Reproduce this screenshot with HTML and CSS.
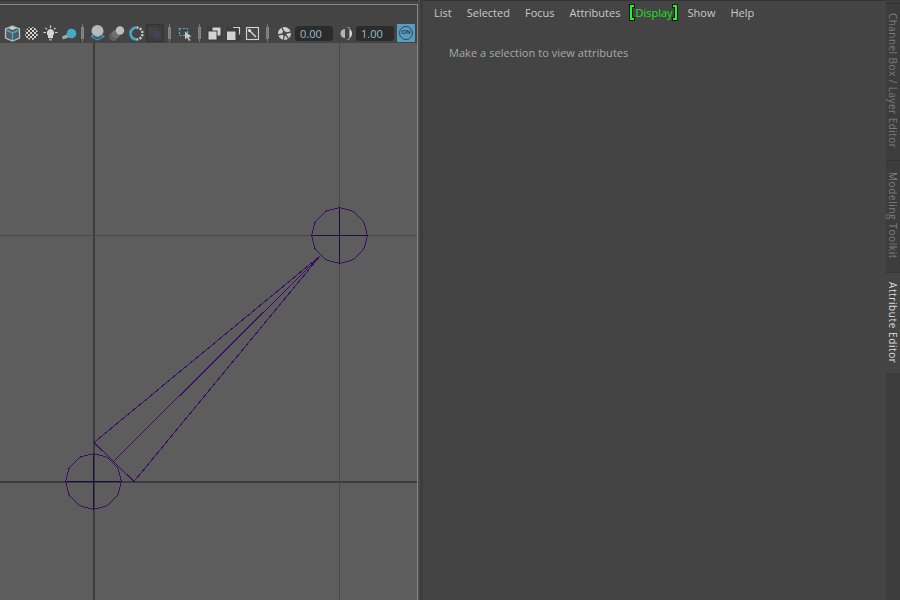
FILE: index.html
```html
<!DOCTYPE html>
<html lang="en">
<head>
<meta charset="utf-8">
<title>Attribute Editor</title>
<link rel="stylesheet" href="styles.css">
</head>
<body>
<div class="app">
  <section class="view-panel">
    <div class="toolbar">
      <div class="tb-group">
        <svg class="icon" viewBox="0 0 19 19"><path d="M9.500 2 16.500 5v9L9.500 17 2.500 14V5z" fill="#505c60" stroke="#bcbcbc" stroke-width="1.300"/><path d="M3 6l6.500 3 6.500-3M9.500 9v7" fill="none" stroke="#4aa6c2" stroke-width="1.500"/><path d="M9.500 2.500 13.500 4.200 9.500 6 5.500 4.200z" fill="#d0d0d0"/></svg>
        <svg class="icon" viewBox="0 0 19 19"><defs><pattern id="chk" width="4" height="4" patternUnits="userSpaceOnUse"><rect width="4" height="4" fill="#3f3f3f"/><rect width="2" height="2" fill="#d2d2d2"/><rect x="2" y="2" width="2" height="2" fill="#d2d2d2"/></pattern></defs><circle cx="9.500" cy="9.500" r="6.500" fill="url(#chk)"/></svg>
        <svg class="icon" viewBox="0 0 19 19"><path d="M9.500 5a3.800 3.800 0 0 1 2.500 6.500V14H7v-2.500A3.800 3.800 0 0 1 9.500 5z" fill="#d6d6d6"/><rect x="8" y="14.500" width="3" height="2" fill="#9a9a9a"/><path d="M9.500 1.500v2.500M2.500 8.500h2.500M14 8.500h2.500M4.500 3.800l1.500 1.500M14.500 3.800l-1.500 1.500" stroke="#d6d6d6" stroke-width="1.200"/></svg>
        <svg class="icon" viewBox="0 0 19 19"><path d="M2 12.500l5.500-2.500 1 3.500L3 15.500z" fill="#a8a8a8"/><circle cx="11.500" cy="9.500" r="4.800" fill="#45a9c9"/></svg>
      </div>
      <span class="grip grip-a"></span>
      <div class="tb-group">
        <svg class="icon" viewBox="0 0 19 19"><circle cx="9.500" cy="7" r="6" fill="#b9b9b9"/><path d="M3 12.500l6.500 3.500 6.500-3.500-3-1.800M3 12.500l3-1.800M5.500 11l7 3.500M13.500 11l-7 3.500" fill="none" stroke="#45a0c0" stroke-width="1.100"/></svg>
        <svg class="icon" viewBox="0 0 19 19"><circle cx="6.500" cy="12.500" r="4.500" fill="#5f5f5f"/><circle cx="9" cy="10" r="4.200" fill="#6f6f6f"/><circle cx="13" cy="6.500" r="4.200" fill="#bdbdbd"/></svg>
        <svg class="icon" viewBox="0 0 19 19"><path d="M10.500 3.500a6 6 0 0 0 0 12" fill="none" stroke="#45a9c9" stroke-width="2.600"/><path d="M10.500 3.500a6 6 0 0 1 0 12" fill="none" stroke="#c8c8c8" stroke-width="2.400" stroke-dasharray="2 1.300"/></svg>
        <span class="swatch"><svg class="swatch-art" viewBox="0 0 18 18"><defs><pattern id="chk2" width="2" height="2" patternUnits="userSpaceOnUse"><rect width="2" height="2" fill="#3a3a3a"/><rect width="1" height="1" fill="#4d4d4d"/><rect x="1" y="1" width="1" height="1" fill="#4d4d4d"/></pattern></defs><rect x="3" y="3" width="9" height="9" fill="url(#chk2)"/><rect x="7" y="7" width="8" height="8" fill="#3e4556"/></svg></span>
      </div>
      <span class="grip grip-b"></span>
      <svg class="icon" viewBox="0 0 19 19"><rect x="3.500" y="4.500" width="8" height="7" fill="none" stroke="#4fb8c8" stroke-width="1.200" stroke-dasharray="2 1.500"/><path d="M9 7.500l6.500 5-2.800.4 1.800 3.400-1.600.7-1.700-3.400L9 15.500z" fill="#c8c8c8"/></svg>
      <span class="grip grip-c"></span>
      <div class="tb-group">
        <svg class="icon" viewBox="0 0 19 19"><rect x="2" y="2" width="15" height="15" rx="1" fill="#3e3e3e"/><path d="M7.500 3.500h8v8h-3V6.500h-5z" fill="#d2d2d2"/><rect x="3.500" y="7.500" width="8" height="8" fill="#d2d2d2"/></svg>
        <svg class="icon" viewBox="0 0 19 19"><rect x="2" y="2" width="15" height="15" rx="1" fill="#3e3e3e"/><path d="M9 3.500h6.500v7" fill="none" stroke="#d2d2d2" stroke-width="1.200"/><rect x="3" y="7.500" width="8.500" height="8.500" fill="#d2d2d2"/></svg>
        <svg class="icon" viewBox="0 0 19 19"><rect x="3.500" y="3.500" width="12" height="12" fill="#4a4a4a" stroke="#d2d2d2" stroke-width="1.100"/><path d="M6 6l7 7" stroke="#d2d2d2" stroke-width="1.500"/><circle cx="6.500" cy="6.500" r="1.600" fill="#e0e0e0"/></svg>
      </div>
      <span class="grip grip-d"></span>
      <svg class="icon" viewBox="0 0 19 19"><circle cx="9.500" cy="9.500" r="6.500" fill="#cfcfcf"/><path d="M9.500 9.500 7 3.500M9.500 9.500l6.500-1.500M9.500 9.500l4 5M9.500 9.500l-6.500 1.500M9.500 9.500l-1 6.500" stroke="#4a4a4a" stroke-width="1.300"/><circle cx="9.500" cy="9.500" r="2.200" fill="#4a4a4a"/></svg>
      <span class="field field-first">0.00</span>
      <svg class="icon icon-half" viewBox="0 0 19 19"><path d="M9 5a4.500 4.500 0 0 0 0 9z" fill="#b4b4b4"/><path d="M10 3.500h3.500v12H10a6 6 0 0 0 0-12z" fill="#e0e0e0"/></svg>
      <span class="field">1.00</span>
      <span class="on-btn"><span class="on-ring">ON</span></span>
    </div>
    <div class="viewport">
      <svg class="scene" viewBox="0 0 417 557" preserveAspectRatio="xMinYMin">
        <defs>
          <polygon id="ring" points="28,0 24.200,14 14,24.200 0,28 -14,24.200 -24.200,14 -28,0 -24.200,-14 -14,-24.200 0,-28 14,-24.200 24.200,-14"/>
        </defs>
        <path class="grid-major" d="M94 0V557M0 439H417"/>
        <path class="grid-minor" d="M339.500 0V557M0 192.500H417"/>
        <g class="wire">
          <use href="#ring" x="93.500" y="438.500"/>
          <use href="#ring" x="339.500" y="192.500"/>
          <path class="wire-cross" d="M93.500 410.500V466.500M65.500 438.500H121.500M339.500 164.500V220.500M311.500 192.500H367.500"/>
          <path d="M320 213 94 399.500 134 438.500zM320 213 113 419"/>
        </g>
      </svg>
    </div>
  </section>
  <div class="gutter"></div>
  <section class="editor">
    <nav class="menu">
      <span class="menu-item">List</span>
      <span class="menu-item">Selected</span>
      <span class="menu-item">Focus</span>
      <span class="menu-item">Attributes</span>
      <span class="menu-active"><span class="bracket bracket-l"></span><span class="menu-green">Display</span><span class="bracket bracket-r"></span></span>
      <span class="menu-item">Show</span>
      <span class="menu-item">Help</span>
    </nav>
    <p class="message">Make a selection to view attributes</p>
  </section>
  <aside class="tabs">
    <div class="tab tab-channel"><span class="tab-label">Channel Box / Layer Editor</span></div>
    <div class="tab tab-model"><span class="tab-label">Modeling Toolkit</span></div>
    <div class="tab tab-attr"><span class="tab-label">Attribute Editor</span></div>
    <div class="tab-rest"></div>
  </aside>
</div>
</body>
</html>
```
FILE: styles.css
```css
* { box-sizing: border-box; }
html, body { margin: 0; height: 100%; overflow: hidden; }
body { background: #444; font-family: "Open Sans", "Liberation Sans", sans-serif; font-size: 11px; }
.app { display: flex; width: 900px; height: 600px; background: #444; }

.view-panel { width: 418px; height: 600px; display: flex; flex-direction: column; border-top: 1px solid #333; padding-top: 3px; }
.toolbar { height: 39px; flex: none; display: flex; align-items: center; padding: 18px 0 0 3px; border-top: 1px solid #868686; border-right: 1px solid #868686; }
.tb-group { display: flex; align-items: center; }
.icon { width: 19px; height: 19px; flex: none; display: block; }
.icon-half { margin: 0 1px 0 3px; }
.grip { flex: none; width: 3px; height: 18px; background: linear-gradient(#777, #777) center / 1px 100% no-repeat, linear-gradient(#858585, #858585) center / 3px 12px no-repeat; }
.grip-a { margin: 0 4px 0 2px; }
.grip-b { margin: 0 5px 0 4px; }
.grip-c { margin: 0 4px 0 3px; }
.grip-d { margin: 0 6px 0 4px; }
.swatch { width: 18px; height: 18px; margin-left: 1px; background: #3d3d3d; border: 1px solid #333; display: block; }
.swatch-art { width: 16px; height: 16px; display: block; }
.field { flex: none; width: 38px; height: 15px; padding-left: 5px; background: #2b2b2b; border-radius: 3px; color: #95bdd3; font-size: 11px; line-height: 15px; }
.field-first { margin-left: 1px; }
.on-btn { flex: none; width: 18px; height: 18px; margin-left: 3px; background: #5a9cc0; display: flex; align-items: center; justify-content: center; }
.on-ring { width: 14px; height: 14px; border: 1.500px solid #2c4a5e; border-radius: 50%; color: #243c4e; font-family: "Liberation Sans", sans-serif; font-size: 6px; font-weight: bold; line-height: 11px; text-align: center; }

.viewport { flex: 1; background: #5d5d5d; border-right: 1px solid #868686; min-height: 0; }
.scene { display: block; width: 417px; height: 557px; }
.grid-major { fill: none; stroke: #3c3c3c; stroke-width: 2; }
.grid-minor { fill: none; stroke: #484848; stroke-width: 1; }
.wire { fill: none; stroke: #3b0f66; stroke-width: 1; shape-rendering: crispEdges; }
.wire-cross { stroke: #200a40; }

.gutter { width: 5px; flex: none; background: linear-gradient(90deg, #4a4a4a 0 2px, #3c3c3c 2px 5px); }

.editor { flex: 1; display: flex; flex-direction: column; padding: 1px 0 0; border-top: 1px solid #333; min-width: 0; }
.menu { height: 20px; flex: none; display: flex; align-items: center; padding-left: 11px; color: #c8c8c8; }
.menu-item { margin-right: 15px; }
.menu-active { display: flex; align-items: center; margin: 0 11px 0 -5px; }
.menu-green { color: #18e818; margin: 0 0 0 1px; }
.bracket { width: 4px; height: 15px; border: 2px solid #14ff14; filter: drop-shadow(1px 0 0 #111) drop-shadow(-1px 0 0 #111) drop-shadow(0 1px 0 #111) drop-shadow(0 -1px 0 #111); display: block; }
.bracket-l { border-right: 0; }
.bracket-r { border-left: 0; }
.message { margin: 23px 0 0 26px; color: #a8a8a8; letter-spacing: .05px; }

.tabs { width: 14px; flex: none; display: flex; flex-direction: column; background: #3c3c3c; padding-top: 3px; }
.tab { flex: none; display: flex; justify-content: flex-start; align-items: center; writing-mode: vertical-rl; font-size: 10px; letter-spacing: .6px; line-height: 14px; white-space: nowrap; color: #7d7d7d; border-top: 1px solid #333; }
.tab-label { display: block; }
.tab-channel { height: 157px; padding-top: 9px; letter-spacing: .45px; }
.tab-model { height: 112px; padding-top: 11px; }
.tab-attr { height: 101px; padding-top: 9px; background: #444; color: #dcdcdc; border-top: 1px solid #353535; }
.tab-rest { flex: 1; }
```
